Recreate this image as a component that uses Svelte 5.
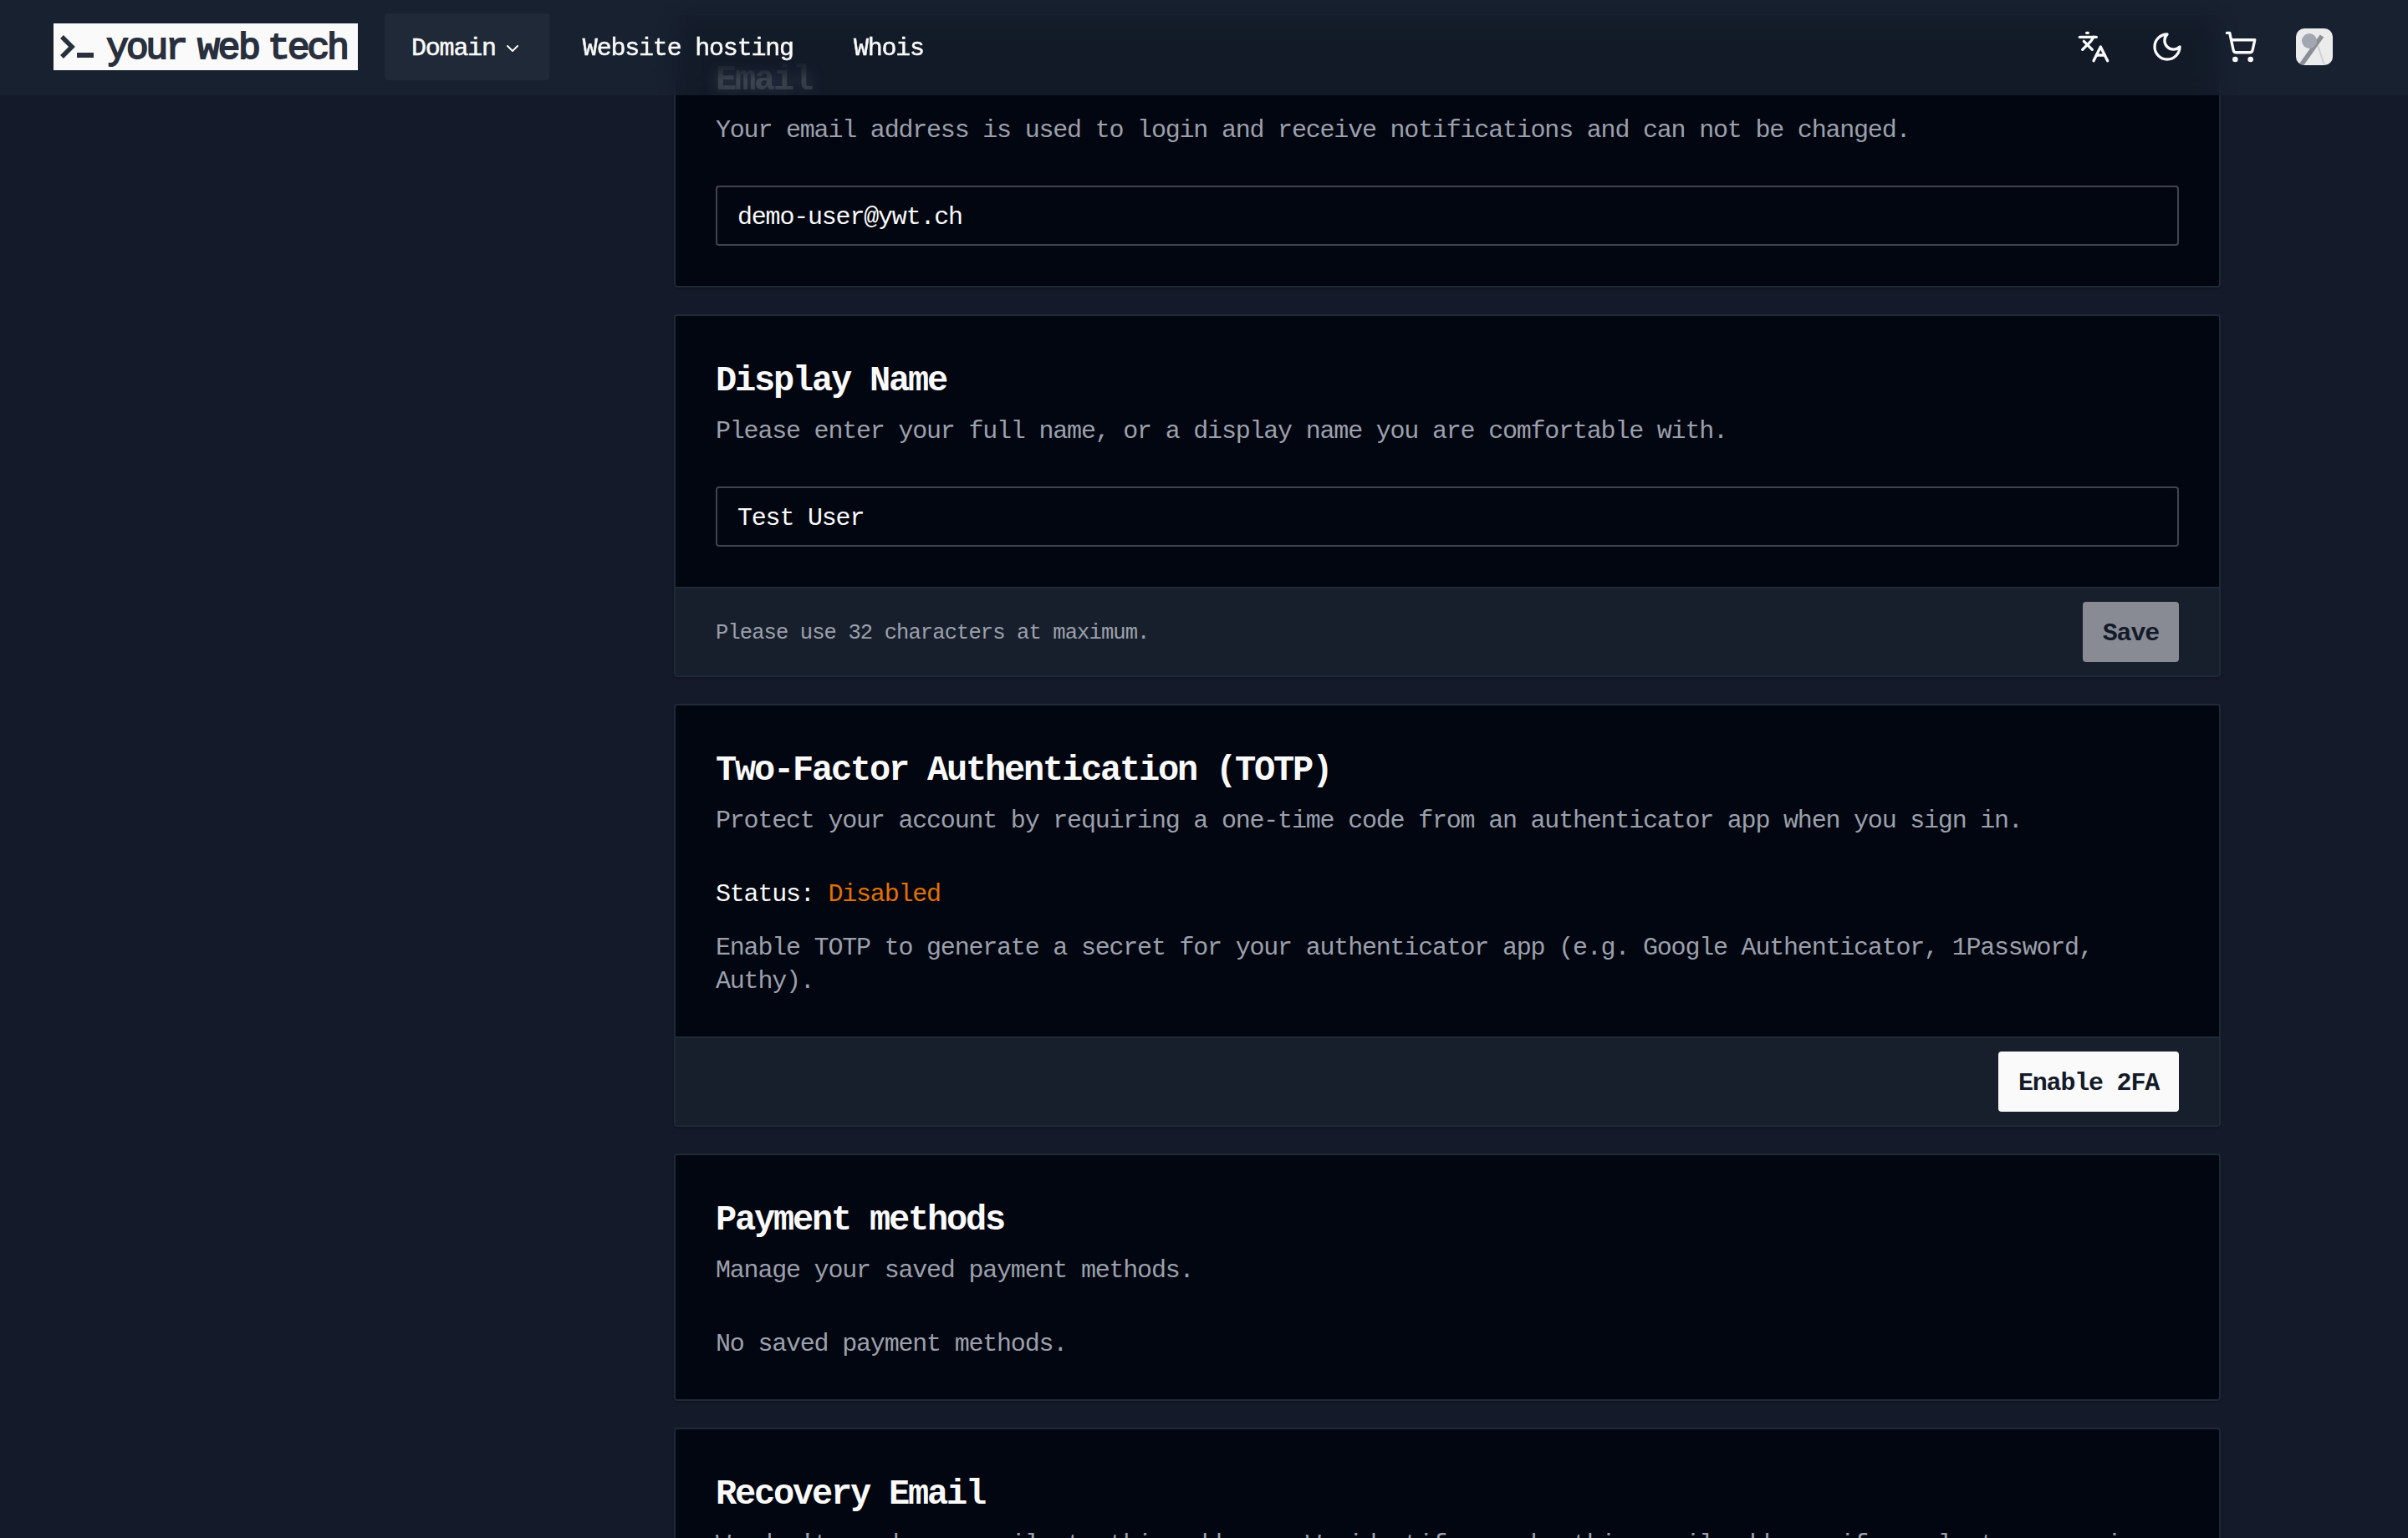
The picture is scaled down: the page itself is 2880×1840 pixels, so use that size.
<script lang="ts">
	const links = ['Website hosting', 'Whois'];

	let displayName = $state('Test User');
	let email = $state('demo-user@ywt.ch');
</script>

<header class="navbar">
	<a class="logo" href="/" aria-label="your web tech">
		<svg width="364" height="56" viewBox="0 0 364 56">
			<path d="M10 16 L22 28 L10 40" fill="none" stroke="#28303e" stroke-width="5.5" />
			<rect x="28" y="35" width="20" height="6" fill="#28303e" />
			<text x="63" y="42" textLength="98">your</text>
			<text x="172" y="42" textLength="76">web</text>
			<text x="256" y="42" textLength="98">tech</text>
		</svg>
	</a>
	<nav>
		<button class="nav-item active">
			Domain
			<svg width="24" height="24" viewBox="0 0 24 24" class="icon"><path d="m6 9 6 6 6-6" /></svg>
		</button>
		{#each links as link}
			<a class="nav-item" href="/">{link}</a>
		{/each}
	</nav>
	<div class="actions">
		<svg class="icon" width="40" height="40" viewBox="0 0 24 24">
			<path d="m5 8 6 6" /><path d="m4 14 6-6 2-3" /><path d="M2 5h12" /><path d="M7 2h1" />
			<path d="m22 22-5-10-5 10" /><path d="M14 18h6" />
		</svg>
		<svg class="icon" width="40" height="40" viewBox="0 0 24 24">
			<path d="M12 3a6 6 0 0 0 9 9 9 9 0 1 1-9-9Z" />
		</svg>
		<svg class="icon" width="40" height="40" viewBox="0 0 24 24">
			<circle cx="8" cy="21" r="1" /><circle cx="19" cy="21" r="1" />
			<path d="M2.05 2.05h2l2.66 12.42a2 2 0 0 0 2 1.58h9.78a2 2 0 0 0 1.95-1.57l1.65-7.43H5.12" />
		</svg>
		<svg class="avatar" width="44" height="44" viewBox="0 0 44 44">
			<rect width="44" height="44" fill="#ebebec" />
			<path d="M26 20 L34 44" stroke="#cfd0d3" stroke-width="2" />
			<path d="M6 44 L31 9" stroke="#8b8e97" stroke-width="5.5" />
			<circle cx="16" cy="15" r="9" fill="#a3a7b1" />
		</svg>
	</div>
</header>

<main>
	<section class="card">
		<div class="body">
			<h2 class="faded">Email</h2>
			<p class="muted">Your email address is used to login and receive notifications and can not be changed.</p>
			<input class="content" bind:value={email} readonly />
		</div>
	</section>

	<section class="card">
		<div class="body">
			<h2>Display Name</h2>
			<p class="muted">Please enter your full name, or a display name you are comfortable with.</p>
			<input class="content" bind:value={displayName} />
		</div>
		<footer>
			<span class="hint">Please use 32 characters at maximum.</span>
			<button class="btn" disabled>Save</button>
		</footer>
	</section>

	<section class="card">
		<div class="body">
			<h2>Two-Factor Authentication (TOTP)</h2>
			<p class="muted">Protect your account by requiring a one-time code from an authenticator app when you sign in.</p>
			<div class="content stack">
				<p>Status: <span class="disabled">Disabled</span></p>
				<p class="muted">
					Enable TOTP to generate a secret for your authenticator app (e.g. Google Authenticator, 1Password, Authy).
				</p>
			</div>
		</div>
		<footer>
			<button class="btn">Enable 2FA</button>
		</footer>
	</section>

	<section class="card">
		<div class="body">
			<h2>Payment methods</h2>
			<p class="muted">Manage your saved payment methods.</p>
			<p class="content muted">No saved payment methods.</p>
		</div>
	</section>

	<section class="card">
		<div class="body">
			<h2>Recovery Email</h2>
			<p class="muted">We don't send any emails to this address. We identify you by this email address if you lost access in</p>
		</div>
	</section>
</main>

<style>
	:global(body) {
		background: #141a29;
		height: 1840px;
		overflow: hidden;
	}

	:global(#app) {
		font-family: 'Liberation Mono', monospace;
		font-size: 30px;
		letter-spacing: -1.2px;
		line-height: 40px;
		color: #fafafa;
	}

	.navbar {
		position: fixed;
		top: 0;
		left: 0;
		right: 0;
		z-index: 10;
		box-sizing: border-box;
		height: 114px;
		padding: 0 90px 2px 64px;
		display: flex;
		align-items: center;
		background: rgba(27, 37, 51, 0.68);
		backdrop-filter: blur(16px);
	}

	.logo {
		width: 364px;
		height: 56px;
		background: #fafafa;
		margin-right: 32px;
	}

	.logo svg {
		display: block;
	}

	.logo text {
		font-size: 45px;
		letter-spacing: 0;
		fill: #28303e;
		stroke: #28303e;
		stroke-width: 1.8px;
	}

	nav {
		display: flex;
		gap: 8px;
	}

	.nav-item {
		box-sizing: border-box;
		height: 80px;
		padding: 3px 32px 0;
		display: flex;
		align-items: center;
		gap: 8px;
		border: 0;
		border-radius: 4px;
		background: none;
		color: inherit;
		font: inherit;
		letter-spacing: inherit;
		text-decoration: none;
		-webkit-text-stroke: 0.5px;
	}

	.nav-item.active {
		background: #1f2937;
	}

	.icon {
		fill: none;
		stroke: #fafafa;
		stroke-width: 2;
		stroke-linecap: round;
		stroke-linejoin: round;
	}

	.actions {
		margin-left: auto;
		display: flex;
		align-items: center;
		gap: 48px;
	}

	.avatar {
		margin-left: -2px;
		border-radius: 10px;
	}

	main {
		width: 1850px;
		margin-left: 806px;
		padding-top: 16px;
		display: flex;
		flex-direction: column;
		gap: 32px;
	}

	.card {
		border: 2px solid #1f2937;
		border-radius: 4px;
		background: #020611;
		box-shadow: 0 2px 2px rgba(0, 0, 0, 0.2);
	}

	.body {
		padding: 50px 48px 46px;
		display: flex;
		flex-direction: column;
	}

	h2 {
		margin: 0 0 12px;
		font-size: 42px;
		line-height: 56px;
		letter-spacing: -2.2px;
		font-weight: bold;
	}

	/* scrolled under the navbar, still faintly legible through it */
	.faded {
		position: relative;
		z-index: 11;
		margin-left: -40px;
		padding-left: 40px;
		color: rgba(250, 250, 250, 0.13);
		text-shadow: 0 0 18px rgba(110, 120, 135, 0.4);
		mask-image: linear-gradient(transparent 0, rgba(0, 0, 0, 0.4) 14px, #000 28px, #000 46px, transparent 46px);
	}

	p {
		margin: 0;
	}

	.muted {
		color: #9ca0ac;
	}

	.content {
		margin-top: 48px;
	}

	.stack {
		display: flex;
		flex-direction: column;
		gap: 24px;
	}

	.disabled {
		color: #e17100;
	}

	input {
		box-sizing: border-box;
		width: 100%;
		height: 72px;
		padding: 3px 24px 0;
		border: 2px solid #41444f;
		border-radius: 4px;
		background: transparent;
		color: inherit;
		font: inherit;
		letter-spacing: inherit;
	}

	input.content {
		margin-top: 46px;
		margin-bottom: 2px;
	}

	footer {
		display: flex;
		align-items: center;
		padding: 16px 48px;
		border-top: 2px solid #1f2937;
		background: #181f2c;
	}

	.hint {
		padding-top: 3px;
		font-size: 25.5px;
		letter-spacing: -0.9px;
		color: #9ca0ac;
	}

	.btn {
		height: 72px;
		margin-left: auto;
		padding: 3px 24px 0;
		border: 0;
		border-radius: 4px;
		background: #fafafa;
		color: #141a29;
		font: inherit;
		font-weight: bold;
		letter-spacing: inherit;
	}

	.btn:disabled {
		background: #888b94;
	}
</style>
